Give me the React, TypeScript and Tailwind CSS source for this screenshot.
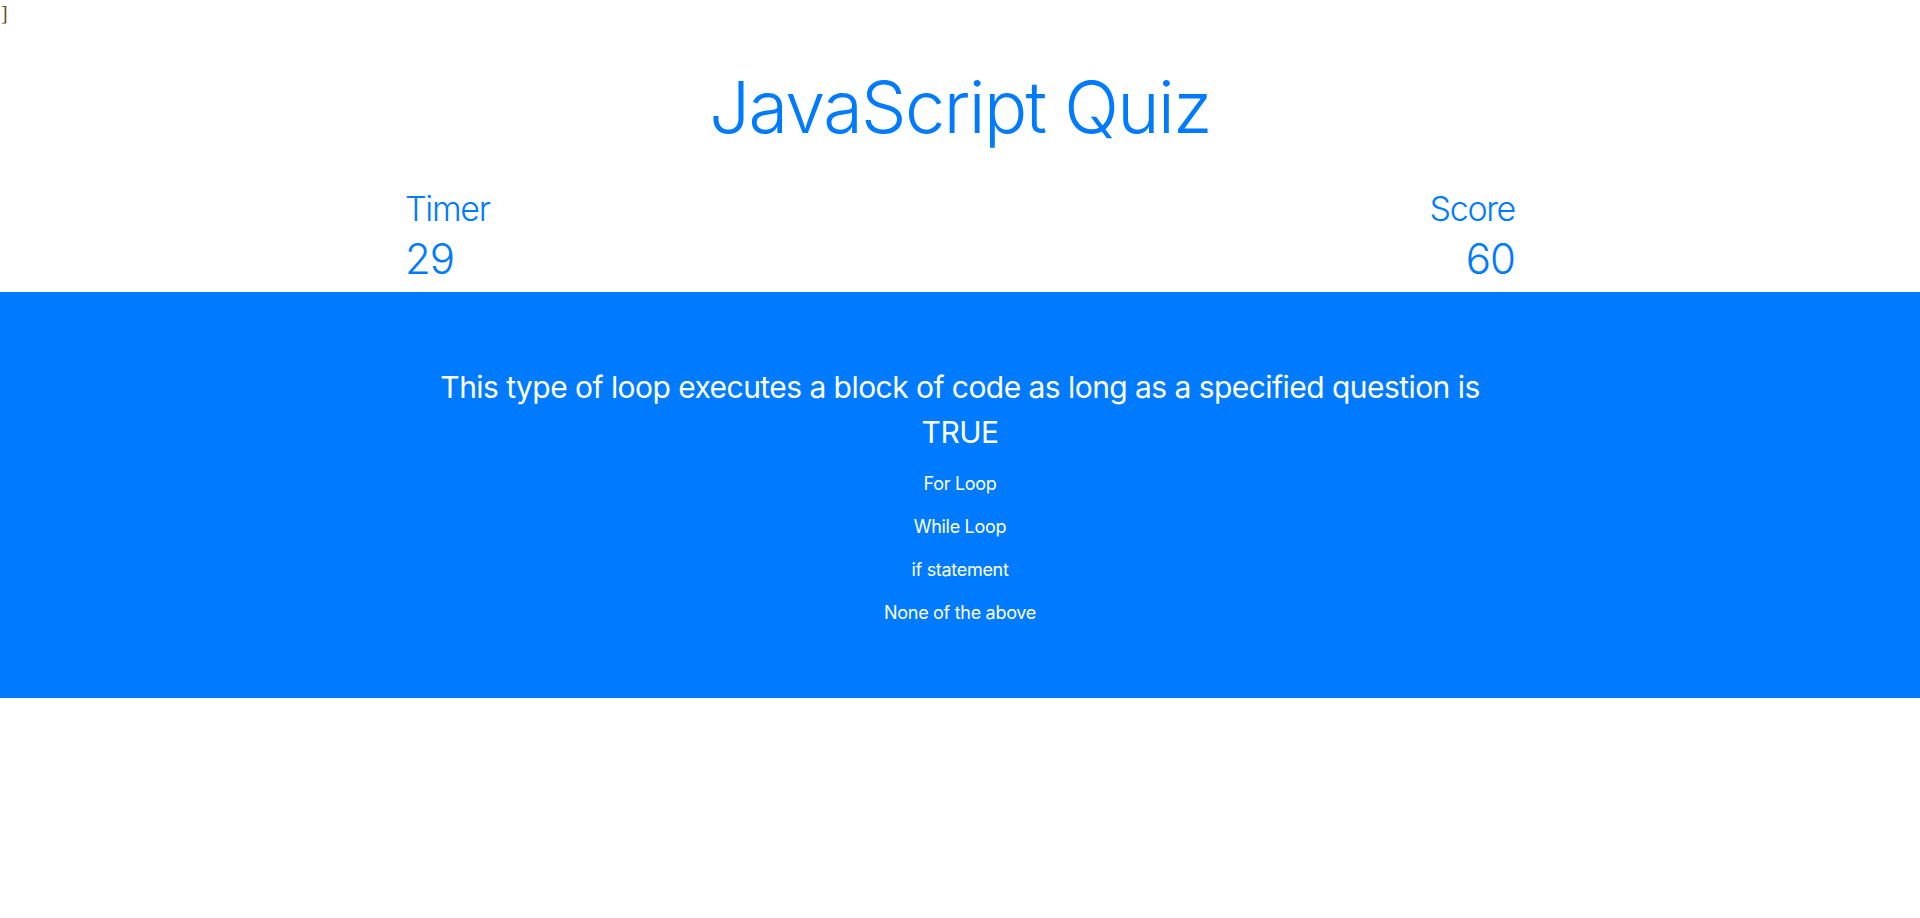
import React from 'react';

const options = ['For Loop', 'While Loop', 'if statement', 'None of the above'];

const App: React.FC = () => {
  return (
    <div className="min-h-screen bg-white font-['Inter',sans-serif]">
      <div className="h-5 pl-px pt-[3px] font-['Liberation_Serif',serif] text-[20px] leading-[20px] text-[#5e4b1c]">]</div>

      <h1 className="mt-[44px] text-center text-[72px] font-light leading-[1.2] tracking-[-1.6px] text-[#007bff]">
        JavaScript Quiz
      </h1>

      <div className="mx-auto mt-[39px] flex w-[1110px] justify-between text-[#007bff]">
        <div>
          <p className="text-[34px] font-light leading-[1.2] tracking-[-1.3px]">Timer</p>
          <p className="mt-[4px] text-[42px] font-light leading-[1.2] tracking-[-1px]">29</p>
        </div>
        <div className="text-right">
          <p className="text-[34px] font-light leading-[1.2] tracking-[-1.3px]">Score</p>
          <p className="mt-[4px] text-[42px] font-light leading-[1.2] tracking-[-1px]">60</p>
        </div>
      </div>

      <section className="mt-[7px] bg-[#007bff] pt-[73px] pb-[72px] text-center text-white">
        <div className="mx-auto w-[1110px]">
          <h2 className="mx-auto max-w-[1080px] text-[30px] font-normal leading-[45px] tracking-[-0.55px]">
            This type of loop executes a block of code as long as a specified question is TRUE
          </h2>
          <div className="mt-[15px] flex flex-col gap-4">
            {options.map((o) => (
              <p key={o} className="text-[18px] leading-[27px] tracking-[-0.3px]">
                {o}
              </p>
            ))}
          </div>
        </div>
      </section>
    </div>
  );
};

export default App;
